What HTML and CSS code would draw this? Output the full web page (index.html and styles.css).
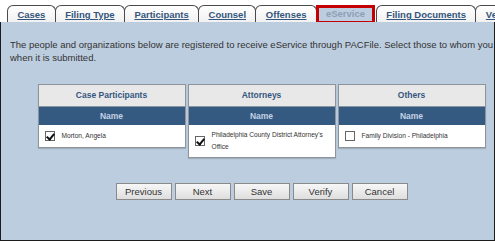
FILE: index.html
```html
<!DOCTYPE html>
<html lang="en">
<head>
  <meta charset="UTF-8">
  <title>eService - PACFile</title>
  <link rel="stylesheet" href="styles.css">
</head>
<body>

  <div class="tabs">
    <a class="tab" href="#">Cases</a>
    <a class="tab" href="#">Filing Type</a>
    <a class="tab" href="#">Participants</a>
    <a class="tab" href="#">Counsel</a>
    <a class="tab" href="#">Offenses</a>
    <a class="tab active" href="#">eService</a>
    <a class="tab" href="#">Filing Documents</a>
    <a class="tab" href="#">Verification</a>
  </div>

  <div class="panel">
    <div class="content">
      <p class="intro">The people and organizations below are registered to receive eService through PACFile. Select those to whom you wish to send this filing<br>when it is submitted.</p>

      <div class="lists">
        <div class="list">
          <div class="list-title">Case Participants</div>
          <div class="list-head">Name</div>
          <label class="list-row">
            <span class="check checked"></span>
            <span>Morton, Angela</span>
          </label>
        </div>
        <div class="list">
          <div class="list-title">Attorneys</div>
          <div class="list-head">Name</div>
          <label class="list-row">
            <span class="check checked"></span>
            <span>Philadelphia County District Attorney's Office</span>
          </label>
        </div>
        <div class="list">
          <div class="list-title">Others</div>
          <div class="list-head">Name</div>
          <label class="list-row">
            <span class="check"></span>
            <span>Family Division - Philadelphia</span>
          </label>
        </div>
      </div>

      <div class="actions">
        <button class="btn">Previous</button>
        <button class="btn">Next</button>
        <button class="btn">Save</button>
        <button class="btn">Verify</button>
        <button class="btn">Cancel</button>
      </div>
    </div>
  </div>

</body>
</html>
```

FILE: styles.css
```css
* { box-sizing: border-box; }

body {
  margin: 0;
  width: 495px;
  height: 241px;
  overflow: hidden;
  background: #fff;
  font-family: "Liberation Sans", Arial, sans-serif;
  color: #333;
}

.tabs {
  display: flex;
  height: 22px;
  padding: 5px 0 0 7px;
  white-space: nowrap;
  overflow: hidden;
  background: #fff;
}

.tab {
  height: 17px;
  padding: 0 9.4px;
  border: 1px solid #4a4a4a;
  border-bottom: none;
  border-radius: 6px 6px 0 0;
  margin-right: -1px;
  background: linear-gradient(#fff, #f1f1f1);
  font-size: 9.5px;
  font-weight: bold;
  line-height: 17px;
  color: #34557c;
  text-decoration: underline;
}

.tab.active {
  position: relative;
  height: 19px;
  margin: 0 1px 0 0;
  padding: 0 7px;
  border: 3px solid #c40000;
  border-radius: 0;
  background: #bccddf;
  color: #8e9fb4;
  text-decoration: none;
  line-height: 12px;
}

.panel {
  height: 219px;
  background: #bccddf;
  border: 1px solid #1c1c1c;
  border-top: none;
  overflow: hidden;
}

.content {
  width: 521px;
}

.intro {
  margin: 0;
  padding: 16px 0 0 9px;
  font-size: 9.5px;
  line-height: 13px;
  white-space: nowrap;
  color: #333;
}

.lists {
  display: flex;
  justify-content: center;
  align-items: flex-start;
  gap: 2px;
  margin-top: 20px;
}

.list {
  width: 148px;
  border: 1px solid #8d949c;
  background: #fff;
  box-shadow: 0 1px 1px rgba(0, 0, 0, 0.15);
}

.list-title {
  height: 21px;
  background: #e8e8e8;
  font-size: 8.5px;
  font-weight: bold;
  line-height: 21px;
  text-align: center;
  color: #35577f;
}

.list-head {
  height: 19px;
  background: #355a82;
  border-top: 1px solid #8a96a3;
  font-size: 8.5px;
  font-weight: bold;
  line-height: 18px;
  text-align: center;
  color: #c3d1e2;
}

.list-row {
  display: flex;
  align-items: center;
  gap: 7px;
  min-height: 22px;
  padding: 4px 4px 4px 6px;
  font-size: 6.6px;
  line-height: 12px;
  color: #333;
}

.check {
  flex: none;
  width: 10px;
  height: 10px;
  border: 1px solid #666;
  background: #fff;
  position: relative;
}

.check.checked::after {
  content: '';
  position: absolute;
  left: 2px;
  top: 0;
  width: 3px;
  height: 6px;
  border: solid #111;
  border-width: 0 2px 2px 0;
  transform: rotate(40deg);
}

.actions {
  display: flex;
  justify-content: center;
  gap: 3px;
  margin-top: 25px;
}

.btn {
  width: 56px;
  height: 17px;
  padding: 0;
  border: 1px solid #8a8a8a;
  background: linear-gradient(#f7f7f7, #dedede);
  font-family: "Liberation Sans", Arial, sans-serif;
  font-size: 9.5px;
  color: #333;
}
```
